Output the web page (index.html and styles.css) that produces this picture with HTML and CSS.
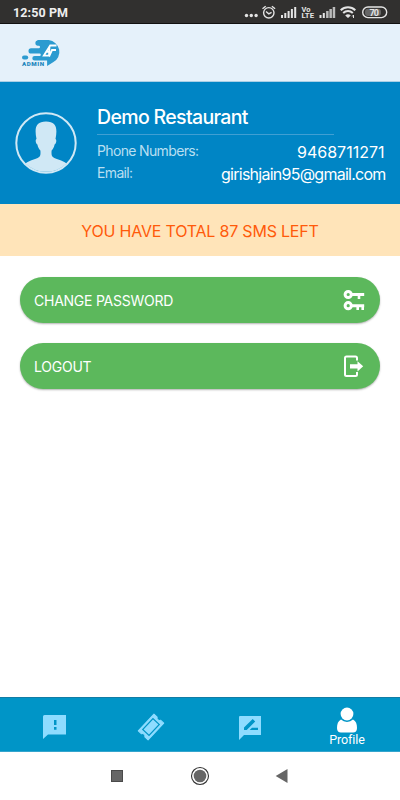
FILE: index.html
```html
<!DOCTYPE html>
<html lang="en">
<head>
    <meta charset="UTF-8">
    <meta name="viewport" content="width=device-width, initial-scale=1.0">
    <title>Profile</title>
    <link rel="stylesheet" href="styles.css">
</head>
<body>
    <div class="status-bar">
        <span class="time">12:50 PM</span>
        <svg class="status-icons" width="146" height="16" viewBox="242 4 146 16">
            <g fill="#e4e4e4">
                <circle cx="246.500" cy="15.500" r="1.700"/>
                <circle cx="251.300" cy="15.500" r="1.700"/>
                <circle cx="256.100" cy="15.500" r="1.700"/>
                <path d="M281 15h2v3h-2zM284.300 13h2v5h-2zM287.600 11h2v7h-2zM290.900 9h2v9h-2zM294.200 7h2v11h-2z"/>
                <path d="M319.500 15h2v3h-2zM322.800 13h2v5h-2z"/>
                <path d="M326.100 11h2.500v7h-2.500zM329.400 9h2.500v9h-2.500zM332.700 7h2.500v11h-2.500z" fill="#bbb"/>
                <path d="M345.200 15.500l2.800 2.500 2.800-2.500a4.200 4.200 0 0 0-5.600 0z"/>
            </g>
            <g fill="none" stroke="#e4e4e4" stroke-width="1.400">
                <circle cx="268.800" cy="12.800" r="5.200"/>
                <path d="M262.500 8.800l3.200-2.600M275.100 8.800l-3.200-2.600M266 11.500l2.800 2.300 2.800-1.500"/>
                <path d="M340.700 10.300a10.500 10.500 0 0 1 14.600 0M343.200 13a7 7 0 0 1 9.600 0" stroke-width="2"/>
                <path d="M353.500 18v-3l-1.300 1.500" stroke-width="1"/>
                <rect x="362.700" y="7" width="24" height="10.600" rx="5.300"/>
            </g>
            <rect x="365" y="8.700" width="16" height="7.200" rx="3" fill="#666"/>
            <g class="status-text">
                <text x="301.500" y="11.500" font-size="7.500">Vo</text>
                <text x="301.500" y="18" font-size="7" textLength="12.500" lengthAdjust="spacingAndGlyphs">LTE</text>
                <text x="369.500" y="15.600" font-size="9" textLength="9.500">70</text>
            </g>
        </svg>
    </div>

    <header class="app-header">
        <svg class="logo" width="42" height="30" viewBox="20 38 42 30">
            <g fill="#2c9bd0">
                <path d="M37 40h11a12.500 12 0 0 1 4.500 22.300L46.500 66v-5.500H34a2.300 2.300 0 0 1 0-4.600h5a1.200 1.200 0 0 0 0-2.400h-8.500a2.600 2.600 0 0 1 0-5.200h8a1.300 1.300 0 0 0 0-2.500H37a2.850 2.850 0 0 1 0-5.600z" transform="translate(.6 0)"/>
                <rect x="22" y="55.400" width="6.200" height="4" rx="2"/>
            </g>
            <path d="M56.500 45.500h-6.300L43.800 55.700h6.400M49.500 46l-.5 10M47 51.800h2.500M49 56.500l3-6.500h4" fill="none" stroke="#fff" stroke-width="1.800"/>
            <text class="logo-text" x="22" y="65.900" textLength="22" lengthAdjust="spacing">ADMIN</text>
        </svg>
    </header>

    <section class="profile">
        <svg class="avatar" width="62" height="62" viewBox="0 0 62 62">
            <circle cx="31" cy="31" r="29.700" fill="none" stroke="#d0e8f5" stroke-width="2"/>
            <path fill="#d0e8f5" d="M10.500 51.500c4-3.800 13-4.200 14.500-7.500.7-1.500.5-3.500.4-5.500-1.700-1.800-2.500-3.500-3-6-1.600-.4-2.400-5-.9-5.500C19.200 15.500 21 9.500 31 9.500S42.800 15.500 40.500 27c1.500.5.700 5.100-.9 5.500-.5 2.500-1.300 4.200-3 6-.1 2-.3 4 .4 5.500 1.500 3.300 10.500 3.700 14.500 7.500a29.300 29.300 0 0 1-41 0z"/>
        </svg>
        <div class="profile-info">
            <h1>Demo Restaurant</h1>
            <div class="info-row">
                <span class="info-label">Phone Numbers:</span>
                <span class="info-value phone">9468711271</span>
            </div>
            <div class="info-row">
                <span class="info-label">Email:</span>
                <span class="info-value">girishjain95@gmail.com</span>
            </div>
        </div>
    </section>

    <div class="sms-banner"><span>YOU HAVE TOTAL 87 SMS LEFT</span></div>

    <main class="actions">
        <button type="button" class="action-btn">
            <span>CHANGE PASSWORD</span>
            <svg width="24" height="24" viewBox="0 0 24 24">
                <g fill="none" stroke="#fff" stroke-width="3">
                    <circle cx="6.200" cy="6.500" r="3.100"/>
                    <circle cx="6.200" cy="17.700" r="3.100"/>
                    <path d="M9.200 6.500h13M9.200 17.700h13"/>
                    <path d="M17 7v4M15.700 18v4M20.700 18v4" stroke-width="2.600"/>
                </g>
            </svg>
        </button>
        <button type="button" class="action-btn">
            <span>LOGOUT</span>
            <svg width="24" height="24" viewBox="0 0 24 24">
                <path d="M15 6.500V4a1.500 1.500 0 0 0-1.500-1.500H4.500A1.500 1.500 0 0 0 3 4v16.500A1.500 1.500 0 0 0 4.500 22h9a1.500 1.500 0 0 0 1.500-1.500V18" fill="none" stroke="#fff" stroke-width="2"/>
                <path d="M8 10.200H15.500V7.200l5.700 5.100-5.700 5.100V14.500H8z" fill="#fff"/>
            </svg>
        </button>
    </main>

    <nav class="tab-bar">
        <a class="tab">
            <svg width="28" height="28" viewBox="-1 0 28 28">
                <path fill="#8edcff" d="M4.500 2H26v19.500H8l-5 4.500V3.500A1.500 1.500 0 0 1 4.500 2z"/>
                <path fill="#0095c7" d="M14 7h2.500v5H14zM14 14h2.500v2.700H14z"/>
            </svg>
        </a>
        <a class="tab">
            <svg width="28" height="28" viewBox="0 0 28 28">
                <g transform="translate(14 14) rotate(-47)">
                    <path fill="#8edcff" d="M-11.500-6.700H11.500V-2.300a2.500 2.500 0 0 0 0 4.600V6.700H-11.500V2.300a2.500 2.500 0 0 0 0-4.600z" stroke="#8edcff" stroke-width="1" stroke-linejoin="round"/>
                    <rect x="-7.500" y="-4.300" width="15" height="8.600" fill="none" stroke="#0095c7" stroke-width="1.200"/>
                </g>
            </svg>
        </a>
        <a class="tab">
            <svg width="28" height="28" viewBox="-1 0 28 28">
                <path fill="#8edcff" d="M4 3h21v19H8l-5 5V4a1 1 0 0 1 1-1z"/>
                <path fill="#0095c7" d="M8 14.500l8.700-8.500 2.500 2.500-8.500 8.500H8zM16 14.700h6V17h-8.300z"/>
            </svg>
        </a>
        <a class="tab active">
            <svg width="22" height="26" viewBox="0 0 22 26">
                <circle cx="11" cy="7" r="6.400" fill="#fff"/>
                <path fill="#fff" d="M5 12.500C2 14 1 17 1 21c0 3 1.500 4.500 4 4.500h12c2.500 0 4-1.500 4-4.500 0-4-1-7-4-8.500a8.500 8.500 0 0 1-12 0z"/>
            </svg>
            <span>Profile</span>
        </a>
    </nav>

    <div class="system-nav">
        <svg width="20" height="20" viewBox="0 0 20 20">
            <rect x="4.500" y="4.500" width="11" height="11" fill="#666" stroke="#4a4a4a"/>
        </svg>
        <svg width="20" height="20" viewBox="0 0 20 20">
            <circle cx="10" cy="10" r="8.500" fill="none" stroke="#333" stroke-width="1.100"/>
            <circle cx="10" cy="10" r="6.300" fill="#666"/>
        </svg>
        <svg width="20" height="20" viewBox="0 0 20 20">
            <path d="M2.700 10l11.800-7v14z" fill="#666"/>
        </svg>
    </div>
</body>
</html>
```
FILE: styles.css
```css
* {
    box-sizing: border-box;
}

body {
    margin: 0;
    height: 800px;
    display: flex;
    flex-direction: column;
    background-color: #fff;
    font-family: Inter, sans-serif;
    overflow: hidden;
}

svg {
    display: block;
    flex: none;
}

.status-bar {
    display: flex;
    align-items: center;
    justify-content: space-between;
    height: 24px;
    padding: 0 12px 0 13px;
    background-color: #31302f;
    color: #eee;
    border-bottom: 1px solid #111;
}

.time {
    font-family: Roboto, sans-serif;
    font-size: 12.5px;
    font-weight: 700;
    letter-spacing: 0.1px;
    padding-top: 2px;
}

.status-text {
    fill: #e4e4e4;
    font-family: Roboto, sans-serif;
    font-weight: 700;
}

.app-header {
    height: 58px;
    padding: 14px 20px;
    background-color: #e5f1fa;
    border-bottom: 1px solid #a9cfe6;
}

.logo-text {
    fill: #2387bd;
    font-family: Roboto, sans-serif;
    font-size: 6.2px;
    font-weight: 900;
}

.profile {
    display: flex;
    height: 122px;
    padding: 0 15px;
    background-color: #0085c5;
    color: #fff;
}

.avatar {
    margin: 30px 20px 0 0;
}

.profile-info {
    flex: 1;
    padding-top: 22px;
}

h1 {
    width: 237px;
    height: 31px;
    margin: 0 0 5px;
    border-bottom: 1px solid #409fd3;
    font-size: 19.5px;
    font-weight: 500;
    line-height: 26px;
    letter-spacing: -0.65px;
}

.info-row {
    display: flex;
    justify-content: space-between;
    height: 22px;
    line-height: 22px;
}

.info-label {
    color: #b8dff1;
    font-size: 14px;
    letter-spacing: -0.65px;
}

.info-value {
    font-size: 16px;
    line-height: 25px;
    letter-spacing: -0.75px;
    margin-right: -0.5px;
}

.info-value.phone {
    letter-spacing: 0;
    margin-right: 0.5px;
}

.sms-banner {
    display: flex;
    align-items: center;
    justify-content: center;
    height: 52px;
    padding-top: 2px;
    background-color: #ffe4b9;
    color: #ff5a0a;
    font-size: 16px;
    letter-spacing: -0.2px;
}

.actions {
    flex: 1;
    display: flex;
    flex-direction: column;
    gap: 20px;
    padding: 21px 20px;
}

.action-btn {
    display: flex;
    align-items: center;
    justify-content: space-between;
    height: 46px;
    padding: 0 14px;
    border: none;
    border-radius: 23px;
    background-color: #5cb85c;
    box-shadow: 0 1px 2px rgba(0, 0, 0, 0.3);
    color: #fff;
    font-family: inherit;
    font-size: 14px;
    letter-spacing: -0.25px;
}

.action-btn span {
    padding-top: 1px;
}

.tab-bar {
    display: flex;
    height: 55px;
    padding: 0 4px;
    background-color: #0095c7;
    border-top: 1px solid #127da5;
    border-bottom: 1px solid #35a5cd;
}

.tab {
    flex: 1;
    display: flex;
    flex-direction: column;
    align-items: center;
    padding-top: 15px;
}

.tab.active {
    padding-top: 9px;
    color: #fff;
    font-family: Roboto, sans-serif;
    font-size: 12.5px;
    line-height: 13px;
    letter-spacing: -0.1px;
}

.system-nav {
    display: flex;
    justify-content: center;
    align-items: center;
    gap: 63px;
    height: 48px;
}
```
